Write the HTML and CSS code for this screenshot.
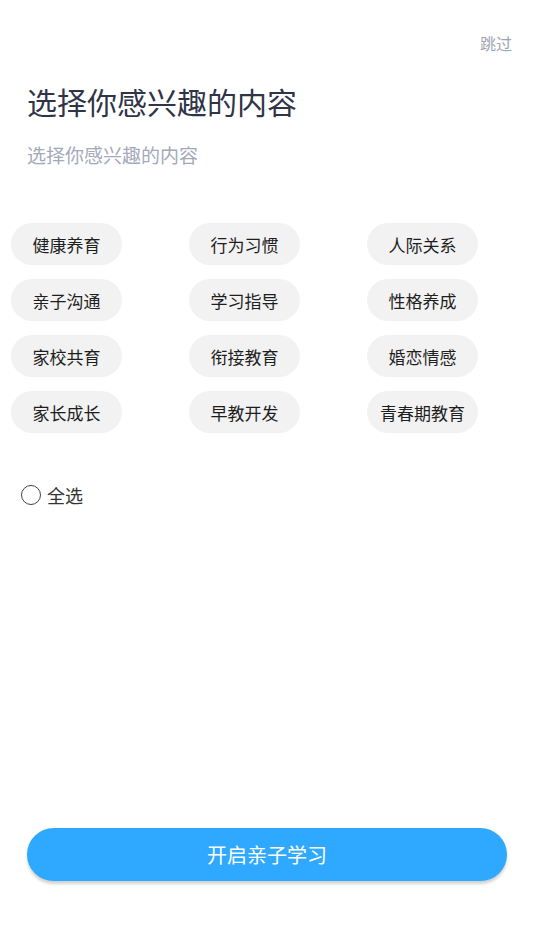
FILE: index.html
```html
<!DOCTYPE html>
<html lang="zh-CN">
<head>
    <meta charset="UTF-8">
    <meta name="viewport" content="width=device-width, initial-scale=1.0">
    <title>选择你感兴趣的内容</title>
    <link rel="stylesheet" href="styles.css">
</head>
<body>

<div class="page">
    <div class="top-bar">
        <a class="skip" href="#">跳过</a>
    </div>

    <h1 class="title">选择你感兴趣的内容</h1>
    <p class="subtitle">选择你感兴趣的内容</p>

    <div class="tags">
        <div class="tag-cell"><span class="tag">健康养育</span></div>
        <div class="tag-cell"><span class="tag">行为习惯</span></div>
        <div class="tag-cell"><span class="tag">人际关系</span></div>
        <div class="tag-cell"><span class="tag">亲子沟通</span></div>
        <div class="tag-cell"><span class="tag">学习指导</span></div>
        <div class="tag-cell"><span class="tag">性格养成</span></div>
        <div class="tag-cell"><span class="tag">家校共育</span></div>
        <div class="tag-cell"><span class="tag">衔接教育</span></div>
        <div class="tag-cell"><span class="tag">婚恋情感</span></div>
        <div class="tag-cell"><span class="tag">家长成长</span></div>
        <div class="tag-cell"><span class="tag">早教开发</span></div>
        <div class="tag-cell"><span class="tag">青春期教育</span></div>
    </div>

    <label class="select-all">
        <span class="radio"></span>
        <span>全选</span>
    </label>

    <div class="footer">
        <button type="button" class="start-btn">开启亲子学习</button>
    </div>
</div>

</body>
</html>
```

FILE: styles.css
```css
body {
    margin: 0;
    background: #ffffff;
    font-family: "Noto Sans CJK SC", "Noto Sans", sans-serif;
}

.page {
    display: flex;
    flex-direction: column;
    height: 100vh;
    box-sizing: border-box;
    padding-top: 31px;
}

.top-bar {
    display: flex;
    justify-content: flex-end;
    padding-right: 22px;
}

.skip {
    font-size: 16px;
    line-height: 24px;
    color: #9ea4b4;
    text-decoration: none;
}

.title {
    margin: 26px 0 0 27px;
    font-size: 30px;
    line-height: 40px;
    font-weight: normal;
    color: #2f3447;
}

.subtitle {
    margin: 20px 0 0 27px;
    font-size: 19px;
    line-height: 28px;
    color: #a3a9bb;
}

.tags {
    display: grid;
    grid-template-columns: repeat(3, 178px);
    row-gap: 14px;
    margin-top: 54px;
    padding-left: 11px;
}

.tag-cell {
    display: flex;
}

.tag {
    display: flex;
    align-items: center;
    justify-content: center;
    width: 111px;
    height: 42px;
    border-radius: 21px;
    background: #f2f2f2;
    font-size: 17px;
    color: #1e1e1e;
}

.select-all {
    display: flex;
    align-items: center;
    gap: 6px;
    margin: 48px 0 0 21px;
    font-size: 18px;
    line-height: 28px;
    color: #333333;
}

.radio {
    width: 18px;
    height: 18px;
    border: 1.6px solid #444444;
    border-radius: 50%;
}

.footer {
    margin-top: auto;
    padding: 0 27px 69px;
}

.start-btn {
    width: 100%;
    height: 53px;
    border: none;
    border-radius: 27px;
    background: #2fa9ff;
    color: #ffffff;
    font-family: inherit;
    font-size: 20px;
    box-shadow: 0 3px 3px rgba(0, 0, 0, 0.18);
    cursor: pointer;
}
```
